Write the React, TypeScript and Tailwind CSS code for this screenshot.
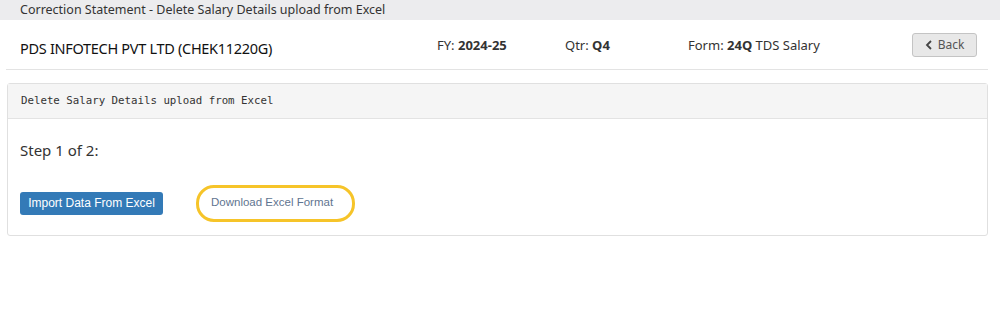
import React from "react";

const sans = "font-['Noto_Sans','Open_Sans',sans-serif]";

export default function App() {
  return (
    <div className={`w-[1000px] h-[318px] bg-white text-[#333] ${sans}`}>
      {/* page title strip */}
      <div className="h-[20px] bg-[#ececee] pl-[20px] text-[12.5px] leading-[20px] text-[#333]">
        Correction Statement - Delete Salary Details upload from Excel
      </div>

      {/* deductor info row */}
      <div className="ml-[6px] mr-[12px] flex h-[50px] items-center border-b border-[#e3e3e3] pl-[14px] pr-[11px] pt-[3px]">
        <div className="mt-[5px] w-[417px] text-[14.5px] tracking-[-0.3px] text-[#111]">PDS INFOTECH PVT LTD (CHEK11220G)</div>
        <div className="w-[128px] text-[13px]">
          FY: <span className="font-bold">2024-25</span>
        </div>
        <div className="w-[123px] text-[13px]">
          Qtr: <span className="font-bold">Q4</span>
        </div>
        <div className="flex-1 text-[13px]">
          Form: <span className="font-bold">24Q</span> TDS Salary
        </div>
        <button className="mb-[2px] flex h-[24px] w-[65px] items-center justify-center gap-[5px] rounded-[3px] border border-[#c4c4c4] bg-[#e8e8e8] text-[12px] text-[#555]">
          <svg width="8" height="10" viewBox="0 0 8 10">
            <path d="M6 1 L2 5 L6 9" fill="none" stroke="#444" strokeWidth="1.8" />
          </svg>
          Back
        </button>
      </div>

      {/* panel */}
      <div className="mx-[7px] mt-[13px] w-[981px] rounded-[3px] border border-[#e0e0e0]">
        <div className="flex h-[35px] items-center border-b border-[#e3e3e3] bg-[#f5f5f5] pl-[13px] font-['DejaVu_Sans_Mono',monospace] text-[10.75px] text-[#333]">
          Delete Salary Details upload from Excel
        </div>
        <div className="px-[12px] pb-[20px] pt-[20px]">
          <div className="text-[15px] text-[#333]">Step 1 of 2:</div>
          <div className="mt-[30px] flex items-center">
            <button className="h-[23px] w-[143px] rounded-[3px] bg-[#337ab7] font-['Liberation_Sans',sans-serif] text-[12px] text-white">
              Import Data From Excel
            </button>
            <div className="relative ml-[48px] font-['Liberation_Sans',sans-serif] text-[11.5px] text-[#5f7590]">
              Download Excel Format
              <span className="absolute left-[-15px] top-[-9px] h-[37px] w-[159px] rounded-[18px] border-[3px] border-[#f6c429]" />
            </div>
          </div>
        </div>
      </div>
    </div>
  );
}
